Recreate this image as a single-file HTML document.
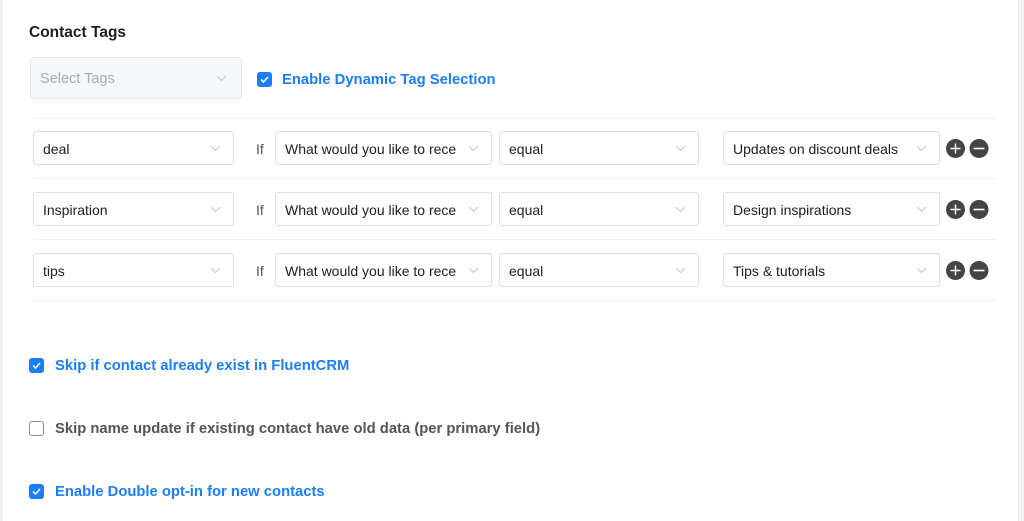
<!DOCTYPE html>
<html><head><style>
*{box-sizing:border-box;margin:0;padding:0}
body{width:1024px;height:521px;background:#fff;font-family:"Liberation Sans",sans-serif;position:relative;overflow:hidden}
.edgeL{position:absolute;left:0;top:0;width:3px;height:521px;background:#f0f0f1}
.edgeR{position:absolute;right:0;top:0;width:6px;height:521px;background:#f3f3f4;border-left:1px solid #e6e6e8}
.a{position:absolute}
.sel{position:absolute;height:34px;border:1px solid #dcdfe6;border-radius:3px;background:#fff;font-size:14px;color:#1e1e1e;padding:1px 9px 0;line-height:33px;white-space:nowrap;overflow:hidden}
.sel svg{position:absolute;right:12px;top:13px}
.line{position:absolute;left:33px;width:962px;height:1px;background:#eef0f3}
.cb{position:absolute;width:15px;height:15px;border-radius:3px;background:#1a7efb}
.cb.off{background:#fff;border:1px solid #8c8f94}
.lbl{position:absolute;font-size:14.8px;font-weight:bold;color:#1a7efb}
.if{position:absolute;left:256px;font-size:14px;color:#555}
</style></head><body>
<div class="edgeL"></div><div class="edgeR"></div>
<div class="a" style="left:29px;top:24px;font-size:15.5px;font-weight:bold;color:#1e1e1e">Contact Tags</div>
<div class="sel" style="left:30px;top:57px;width:212px;height:42px;line-height:42px;padding-top:0;background:#f5f7fa;color:#a8abb2;font-size:14.5px;border-color:#e4e7ed">Select Tags<svg width="11" height="7" style="top:17px;right:14px"><path d="M1 1l4.5 4.5L10 1" stroke="#c0c4cc" fill="none"/></svg></div>
<div class="cb" style="left:257px;top:72px"><svg width="15" height="15"><path d="M4 7.5l2.5 2.5L11 5" stroke="#fff" stroke-width="1.6" fill="none"/></svg></div>
<div class="lbl" style="left:282px;top:72px">Enable Dynamic Tag Selection</div>

<div class="line" style="top:118px"></div>
<div class="line" style="top:178px"></div>
<div class="line" style="top:239px"></div>
<div class="line" style="top:300px"></div>

<div class="sel" style="left:33px;top:131px;width:201px">deal<svg width="11" height="7"><path d="M1 1l4.5 4.5L10 1" stroke="#c0c4cc" fill="none"/></svg></div>
<div class="if" style="top:141px">If</div>
<div class="sel" style="left:275px;top:131px;width:217px">What would you like to rece<svg width="11" height="7"><path d="M1 1l4.5 4.5L10 1" stroke="#c0c4cc" fill="none"/></svg></div>
<div class="sel" style="left:499px;top:131px;width:200px">equal<svg width="11" height="7"><path d="M1 1l4.5 4.5L10 1" stroke="#c0c4cc" fill="none"/></svg></div>
<div class="sel" style="left:723px;top:131px;width:217px">Updates on discount deals<svg width="11" height="7"><path d="M1 1l4.5 4.5L10 1" stroke="#c0c4cc" fill="none"/></svg></div>

<div class="sel" style="left:33px;top:192px;width:201px">Inspiration<svg width="11" height="7"><path d="M1 1l4.5 4.5L10 1" stroke="#c0c4cc" fill="none"/></svg></div>
<div class="if" style="top:202px">If</div>
<div class="sel" style="left:275px;top:192px;width:217px">What would you like to rece<svg width="11" height="7"><path d="M1 1l4.5 4.5L10 1" stroke="#c0c4cc" fill="none"/></svg></div>
<div class="sel" style="left:499px;top:192px;width:200px">equal<svg width="11" height="7"><path d="M1 1l4.5 4.5L10 1" stroke="#c0c4cc" fill="none"/></svg></div>
<div class="sel" style="left:723px;top:192px;width:217px">Design inspirations<svg width="11" height="7"><path d="M1 1l4.5 4.5L10 1" stroke="#c0c4cc" fill="none"/></svg></div>

<div class="sel" style="left:33px;top:253px;width:201px">tips<svg width="11" height="7"><path d="M1 1l4.5 4.5L10 1" stroke="#c0c4cc" fill="none"/></svg></div>
<div class="if" style="top:263px">If</div>
<div class="sel" style="left:275px;top:253px;width:217px">What would you like to rece<svg width="11" height="7"><path d="M1 1l4.5 4.5L10 1" stroke="#c0c4cc" fill="none"/></svg></div>
<div class="sel" style="left:499px;top:253px;width:200px">equal<svg width="11" height="7"><path d="M1 1l4.5 4.5L10 1" stroke="#c0c4cc" fill="none"/></svg></div>
<div class="sel" style="left:723px;top:253px;width:217px">Tips &amp; tutorials<svg width="11" height="7"><path d="M1 1l4.5 4.5L10 1" stroke="#c0c4cc" fill="none"/></svg></div>

<svg class="a" style="left:946px;top:139px" width="44" height="150">
<g id="b"><circle cx="9.5" cy="9.5" r="9.5" fill="#444"/><path d="M4.5 9.5h10M9.5 4.5v10" stroke="#fff" stroke-width="1.4"/><circle cx="33" cy="9.5" r="9.5" fill="#444"/><path d="M27.5 9.5h11" stroke="#fff" stroke-width="1.6"/></g>
<use href="#b" y="61"/><use href="#b" y="122"/>
</svg>

<div class="cb" style="left:29px;top:358px"><svg width="15" height="15"><path d="M4 7.5l2.5 2.5L11 5" stroke="#fff" stroke-width="1.6" fill="none"/></svg></div>
<div class="lbl" style="left:55px;top:358px">Skip if contact already exist in FluentCRM</div>
<div class="cb off" style="left:29px;top:421px"></div>
<div class="lbl" style="left:55px;top:421px;color:#555">Skip name update if existing contact have old data (per primary field)</div>
<div class="cb" style="left:29px;top:484px"><svg width="15" height="15"><path d="M4 7.5l2.5 2.5L11 5" stroke="#fff" stroke-width="1.6" fill="none"/></svg></div>
<div class="lbl" style="left:55px;top:484px">Enable Double opt-in for new contacts</div>
</body></html>
